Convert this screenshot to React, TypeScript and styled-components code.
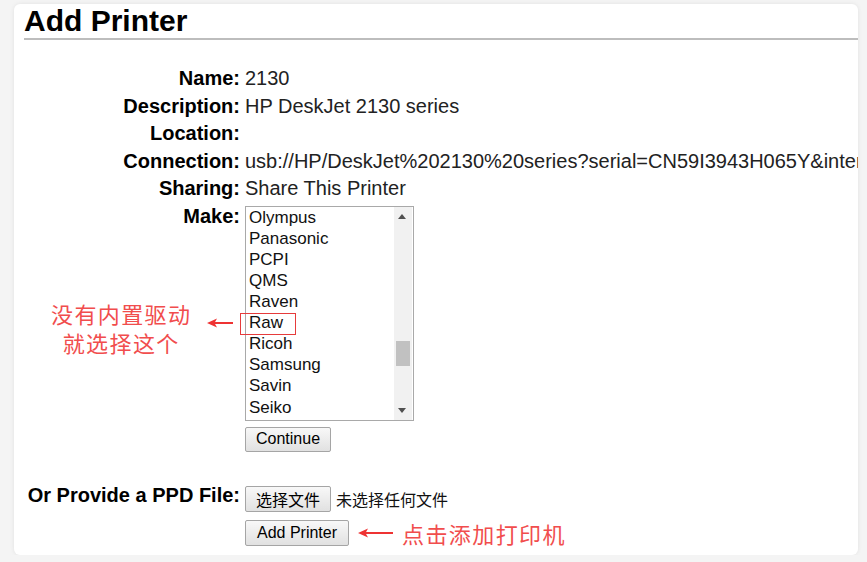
import { Fragment } from 'react';
import styled, { createGlobalStyle } from 'styled-components';

const MAKES = ['Olympus', 'Panasonic', 'PCPI', 'QMS', 'Raven', 'Raw', 'Ricoh', 'Samsung', 'Savin', 'Seiko'];

const INFO = [
  { label: 'Name:', value: '2130' },
  { label: 'Description:', value: 'HP DeskJet 2130 series' },
  { label: 'Location:', value: '' },
  { label: 'Connection:', value: 'usb://HP/DeskJet%202130%20series?serial=CN59I3943H065Y&interface=1' },
  { label: 'Sharing:', value: 'Share This Printer' },
];

const GlobalStyle = createGlobalStyle`
  body {
    margin: 0;
    background: #f4f4f4;
    font-family: "Liberation Sans", Arial, "Noto Sans CJK SC", sans-serif;
  }
`;

const Card = styled.div`
  margin: 6px 9px 0 14px;
  height: 551px;
  background: #fff;
  border-radius: 6px;
  box-shadow: 0 0 4px rgba(0, 0, 0, 0.08);
`;

const Title = styled.h2`
  margin: -2px 0 0 10px;
  padding: 0;
  font-size: 30px;
  line-height: 34px;
  font-weight: bold;
  color: #000;
  border-bottom: 2px solid #bdbdbd;
`;

const Form = styled.div`
  display: grid;
  grid-template-columns: 226px minmax(0, 1fr);
  column-gap: 5px;
  padding-top: 25px;
`;

const Label = styled.div<{ $gap?: number }>`
  position: relative;
  margin-top: ${(p) => p.$gap ?? 0}px;
  text-align: right;
  font-size: 20px;
  line-height: 27.5px;
  font-weight: bold;
  color: #000;
  white-space: nowrap;
`;

const Value = styled.div`
  min-height: 27.5px;
  font-size: 20px;
  line-height: 27.5px;
  color: #222;
  white-space: nowrap;
  overflow: hidden;
`;

const Cell = styled.div<{ $top: number; $gap?: number }>`
  display: flex;
  flex-direction: column;
  align-items: flex-start;
  margin-top: ${(p) => p.$gap ?? 0}px;
  padding-top: ${(p) => p.$top}px;
`;

const ListBox = styled.div`
  position: relative;
  display: flex;
  width: 169px;
  height: 215px;
  box-sizing: border-box;
  border: 1px solid #a9a9a9;
  background: #fff;
`;

const Options = styled.div`
  flex: 1;
`;

const Option = styled.div`
  padding-left: 3px;
  font-size: 17px;
  line-height: 21.1px;
  color: #111;
`;

const ScrollTrack = styled.div`
  position: relative;
  width: 18px;
  margin-right: 1px;
  background: #f1f1f1;
`;

const Thumb = styled.div`
  position: absolute;
  left: 2px;
  right: 2px;
  top: 134px;
  height: 25px;
  background: #c1c1c1;
`;

const ArrowTip = styled.div<{ $down?: boolean }>`
  position: absolute;
  left: 4px;
  ${(p) => (p.$down ? 'bottom: 7px;' : 'top: 7px;')}
  width: 0;
  height: 0;
  border-left: 4.5px solid transparent;
  border-right: 4.5px solid transparent;
  ${(p) => (p.$down ? 'border-top: 5px solid #505050;' : 'border-bottom: 5px solid #505050;')}
`;

const Mark = styled.div`
  position: absolute;
  left: -6px;
  top: 106px;
  width: 56px;
  height: 22px;
  box-sizing: border-box;
  border: 1px solid #e63b3b;
`;

const Button = styled.button<{ $h?: number }>`
  height: ${(p) => p.$h ?? 25}px;
  padding: 0 10px;
  font-family: "Liberation Sans", Arial, "Noto Sans CJK SC", sans-serif;
  font-size: 16px;
  color: #000;
  background: linear-gradient(#f8f8f8, #e1e1e1);
  border: 1px solid #a5a5a5;
  border-radius: 2px;
`;

const FileRow = styled.div`
  display: flex;
  align-items: center;
  gap: 5px;
  font-size: 16px;
  color: #111;
`;

const ActionRow = styled.div`
  display: flex;
  align-items: center;
  gap: 9px;
  margin-top: 7px;
`;

const Note = styled.div`
  font-family: "Noto Sans CJK SC", sans-serif;
  font-size: 22px;
  line-height: 29px;
  letter-spacing: 1.4px;
  color: #f14d4d;
  font-weight: 400;
  white-space: nowrap;
`;

const SideNote = styled(Note)`
  position: absolute;
  left: 37px;
  top: 96px;
  text-align: center;
`;

const SideArrow = styled.span`
  position: absolute;
  left: 193px;
  top: 115px;
  display: flex;
`;

const RedArrow = ({ width }: { width: number }) => (
  <svg width={width} height="10" viewBox={`0 0 ${width} 10`}>
    <polygon points="0,5 10,0.5 7.5,5 10,9.5" fill="#ee3333" />
    <line x1="7" y1="5" x2={width} y2="5" stroke="#ee3333" strokeWidth="2" />
  </svg>
);

export default function App() {
  return (
    <>
      <GlobalStyle />
      <Card>
        <Title>Add Printer</Title>
        <Form>
          {INFO.map(({ label, value }) => (
            <Fragment key={label}>
              <Label>{label}</Label>
              <Value>{value}</Value>
            </Fragment>
          ))}

          <Label>
            Make:
            <SideNote>
              没有内置驱动
              <br />
              就选择这个
            </SideNote>
            <SideArrow>
              <RedArrow width={26} />
            </SideArrow>
          </Label>
          <Cell $top={3.2}>
            <ListBox>
              <Options>
                {MAKES.map((make) => (
                  <Option key={make}>{make}</Option>
                ))}
              </Options>
              <ScrollTrack>
                <ArrowTip />
                <Thumb />
                <ArrowTip $down />
              </ScrollTrack>
              <Mark />
            </ListBox>
            <Button style={{ marginTop: 6 }}>Continue</Button>
          </Cell>

          <Label $gap={30.3}>Or Provide a PPD File:</Label>
          <Cell $top={3.7} $gap={30.3}>
            <FileRow>
              <Button $h={26}>选择文件</Button>
              <span>未选择任何文件</span>
            </FileRow>
            <ActionRow>
              <Button $h={26} style={{ padding: '0 11px' }}>Add Printer</Button>
              <RedArrow width={35} />
              <Note>点击添加打印机</Note>
            </ActionRow>
          </Cell>
        </Form>
      </Card>
    </>
  );
}
